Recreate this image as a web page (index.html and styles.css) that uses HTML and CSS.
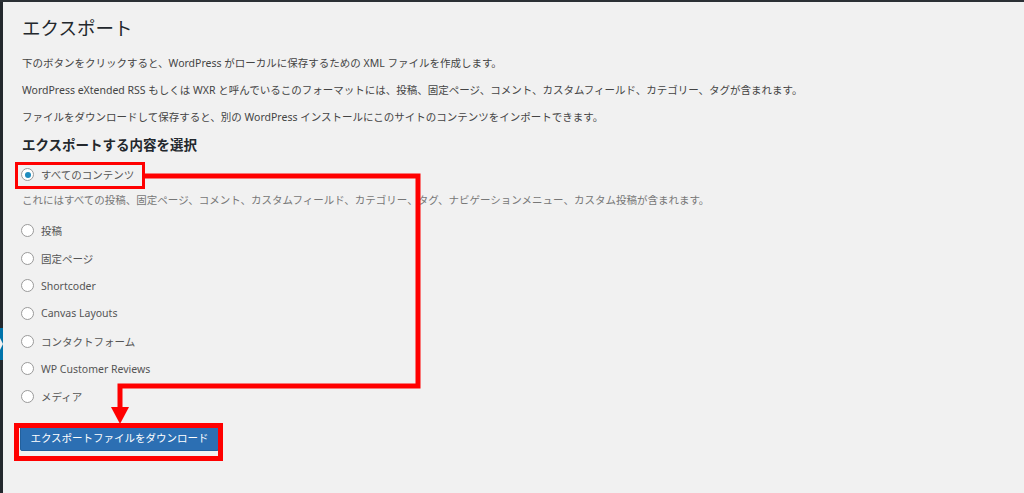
FILE: index.html
```html
<!DOCTYPE html>
<html lang="ja">
<head>
    <meta charset="utf-8">
    <title>エクスポート</title>
    <link rel="stylesheet" href="styles.css">
</head>
<body>
    <div class="frame">
        <div class="menu-edge"><span class="current"></span></div>

        <div class="wrap">
            <h1>エクスポート</h1>
            <p>下のボタンをクリックすると、WordPress がローカルに保存するための XML ファイルを作成します。</p>
            <p>WordPress eXtended RSS もしくは WXR と呼んでいるこのフォーマットには、投稿、固定ページ、コメント、カスタムフィールド、カテゴリー、タグが含まれます。</p>
            <p>ファイルをダウンロードして保存すると、別の WordPress インストールにこのサイトのコンテンツをインポートできます。</p>

            <h2>エクスポートする内容を選択</h2>

            <label class="opt first"><span class="radio checked"></span>すべてのコンテンツ</label>
            <p class="desc">これにはすべての投稿、固定ページ、コメント、カスタムフィールド、カテゴリー、タグ、ナビゲーションメニュー、カスタム投稿が含まれます。</p>

            <ul class="opts">
                <li><label class="opt"><span class="radio"></span>投稿</label></li>
                <li><label class="opt"><span class="radio"></span>固定ページ</label></li>
                <li><label class="opt"><span class="radio"></span>Shortcoder</label></li>
                <li><label class="opt"><span class="radio"></span>Canvas Layouts</label></li>
                <li><label class="opt"><span class="radio"></span>コンタクトフォーム</label></li>
                <li><label class="opt"><span class="radio"></span>WP Customer Reviews</label></li>
                <li><label class="opt"><span class="radio"></span>メディア</label></li>
            </ul>

            <button class="btn">エクスポートファイルをダウンロード</button>
        </div>

        <!-- red annotation drawn over the screenshot -->
        <svg class="annot" width="1024" height="493" viewBox="0 0 1024 493">
            <rect x="16.5" y="163.5" width="127" height="24" fill="none" stroke="#ff0000" stroke-width="3"/>
            <polyline points="145,176 418,176 418,386 120,386 120,410" fill="none" stroke="#ff0000" stroke-width="5"/>
            <polygon points="111,407 129,407 120,424" fill="#ff0000"/>
            <rect x="16.5" y="425.5" width="204" height="33" fill="none" stroke="#ff0000" stroke-width="5"/>
        </svg>
    </div>
</body>
</html>
```

FILE: styles.css
```css
body {
    margin: 0;
    font-family: "Noto Sans", "Noto Sans CJK JP", sans-serif;
    background: #f1f1f1;
    color: #444;
}
.frame {
    position: relative;
    display: flex;
    height: 491px;
    border-top: 2px solid #2b3035;
    overflow: hidden;
}
.menu-edge {
    position: relative;
    width: 3px;
    background: #23282d;
}
.menu-edge .current {
    position: absolute;
    left: 0;
    top: 326px;
    width: 3px;
    height: 32px;
    background: #0073aa;
}
.menu-edge .current::after {
    content: "";
    position: absolute;
    left: 0;
    top: 10px;
    border-top: 6px solid transparent;
    border-bottom: 6px solid transparent;
    border-left: 3px solid #f1f1f1;
}
.wrap {
    flex: 1;
    padding-left: 19px;
}
h1 {
    font-size: 18.5px;
    font-weight: 400;
    line-height: 29px;
    color: #23282d;
    margin: 11px 0 12px;
}
p {
    font-size: 10.5px;
    line-height: 19px;
    margin: 0 0 8px;
}
h2 {
    font-size: 13.5px;
    font-weight: 700;
    line-height: 20px;
    color: #23282d;
    margin: 3px 0 4px;
}
.opt {
    box-sizing: border-box;
    display: flex;
    align-items: center;
    height: 27.7px;
    padding-top: 3px;
    font-size: 10.5px;
    color: #555;
}
.opt.first {
    height: 28px;
}
.radio {
    width: 11px;
    height: 11px;
    border: 1px solid #9a9a9a;
    border-radius: 50%;
    background: #fff;
    margin: 0 7px 0 -1px;
    display: flex;
    align-items: center;
    justify-content: center;
}
.radio.checked::after {
    content: "";
    width: 6px;
    height: 6px;
    border-radius: 50%;
    background: #1e8cbe;
}
.desc {
    color: #777;
    line-height: 26px;
    margin: 0;
}
.opts {
    list-style: none;
    margin: 0;
    padding: 2px 0 0;
}
.btn {
    margin-top: 15px;
    margin-left: -2px;
    width: 199px;
    height: 27px;
    background: #2c6fb3;
    color: #fff;
    border: 1px solid #23609c;
    border-radius: 2px;
    font-family: inherit;
    font-size: 10.5px;
    padding: 0;
}
.annot {
    position: absolute;
    left: 0;
    top: -2px;
    pointer-events: none;
}
```
